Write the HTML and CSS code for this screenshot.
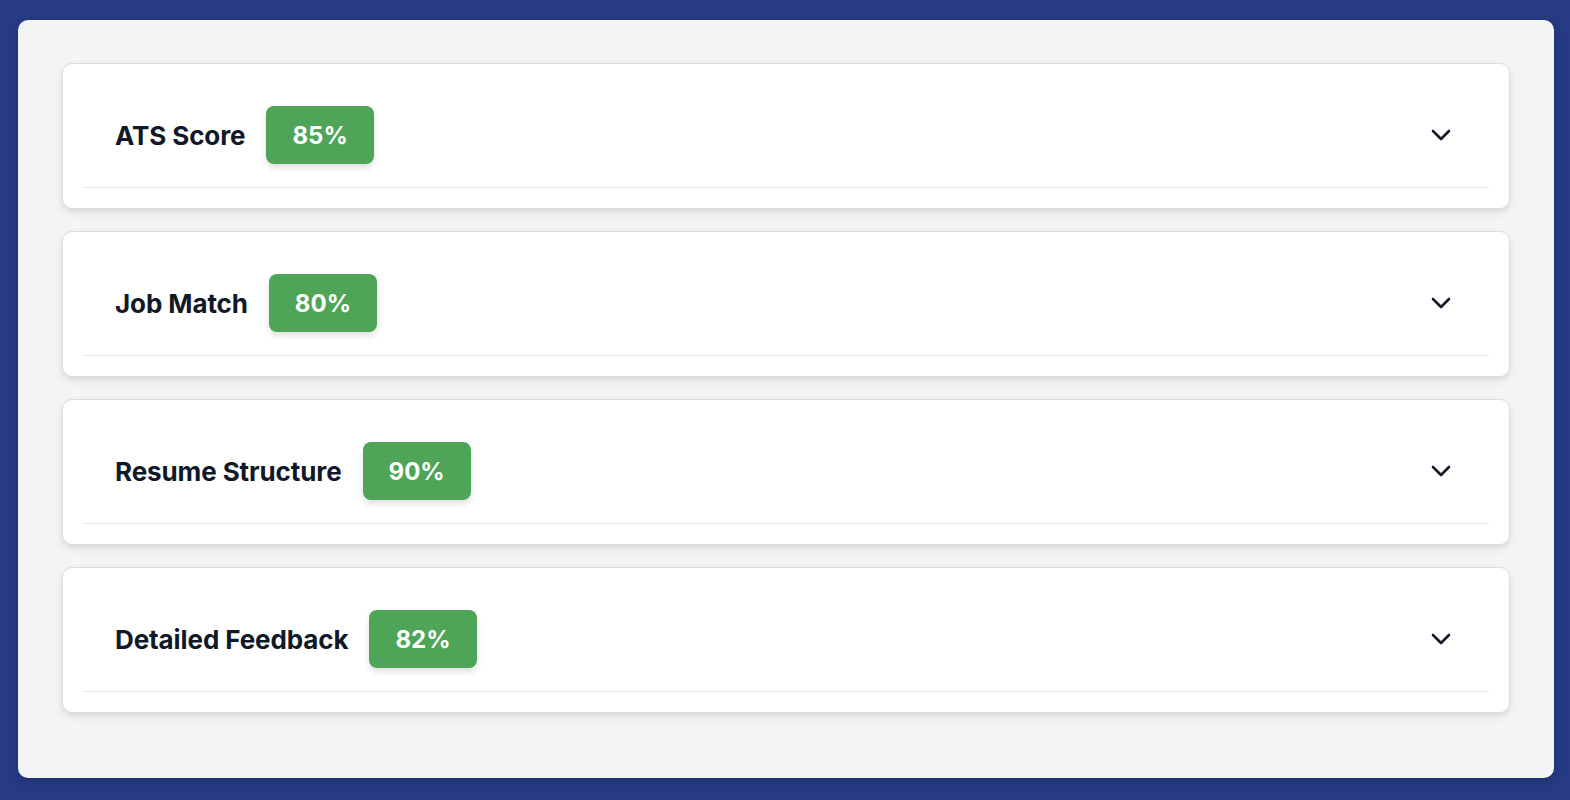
FILE: index.html
```html
<!DOCTYPE html>
<html>
<head>
<meta charset="utf-8">
<link rel="stylesheet" href="styles.css">
</head>
<body>
<div class="panel">
  <div class="card">
    <div class="head">
      <div class="left"><span class="title">ATS Score</span><span class="badge">85%</span></div>
      <svg class="chev" viewBox="0 0 24 24" width="24" height="24"><path d="M4 8l8 8 8-8" fill="none" stroke="#111827" stroke-width="2.6" stroke-linecap="round" stroke-linejoin="round"/></svg>
    </div>
  </div>
  <div class="card">
    <div class="head">
      <div class="left"><span class="title">Job Match</span><span class="badge">80%</span></div>
      <svg class="chev" viewBox="0 0 24 24" width="24" height="24"><path d="M4 8l8 8 8-8" fill="none" stroke="#111827" stroke-width="2.6" stroke-linecap="round" stroke-linejoin="round"/></svg>
    </div>
  </div>
  <div class="card">
    <div class="head">
      <div class="left"><span class="title">Resume Structure</span><span class="badge">90%</span></div>
      <svg class="chev" viewBox="0 0 24 24" width="24" height="24"><path d="M4 8l8 8 8-8" fill="none" stroke="#111827" stroke-width="2.6" stroke-linecap="round" stroke-linejoin="round"/></svg>
    </div>
  </div>
  <div class="card">
    <div class="head">
      <div class="left"><span class="title">Detailed Feedback</span><span class="badge">82%</span></div>
      <svg class="chev" viewBox="0 0 24 24" width="24" height="24"><path d="M4 8l8 8 8-8" fill="none" stroke="#111827" stroke-width="2.6" stroke-linecap="round" stroke-linejoin="round"/></svg>
    </div>
  </div>
</div>
</body>
</html>
```
FILE: styles.css
```css
html, body { margin: 0; padding: 0; }
body {
  background: #263a85;
  font-family: Inter, "Noto Sans", sans-serif;
  padding: 20px 16px 0 18px;
  height: 800px;
  box-sizing: border-box;
}
.panel {
  background: #f3f4f6;
  border-radius: 10px;
  padding: 43px 44px 65px 44px;
  display: flex;
  flex-direction: column;
  gap: 22px;
  box-shadow: 0 4px 12px rgba(0,0,0,0.15);
}
.card {
  background: #fff;
  border: 1px solid #dcdde1;
  border-radius: 10px;
  padding: 20px;
  box-shadow: 0 4px 8px rgba(0,0,0,0.08), 0 2px 4px rgba(0,0,0,0.04);
}
.head {
  display: flex;
  align-items: center;
  justify-content: space-between;
  padding: 22px 36px 23px 32px;
  border-bottom: 1px solid #e5e7eb;
}
.left { display: flex; align-items: center; gap: 21px; }
.title {
  font-size: 26px;
  font-weight: 700;
  color: #111827;
  letter-spacing: -0.1px;
}
.badge {
  background: #4ea457;
  color: #fff;
  font-size: 24px;
  font-weight: 700;
  height: 58px;
  padding: 0 26px;
  display: flex;
  align-items: center;
  border-radius: 8px;
  box-shadow: 0 4px 6px rgba(0,0,0,0.12);
}
.chev { display: block; }
```
